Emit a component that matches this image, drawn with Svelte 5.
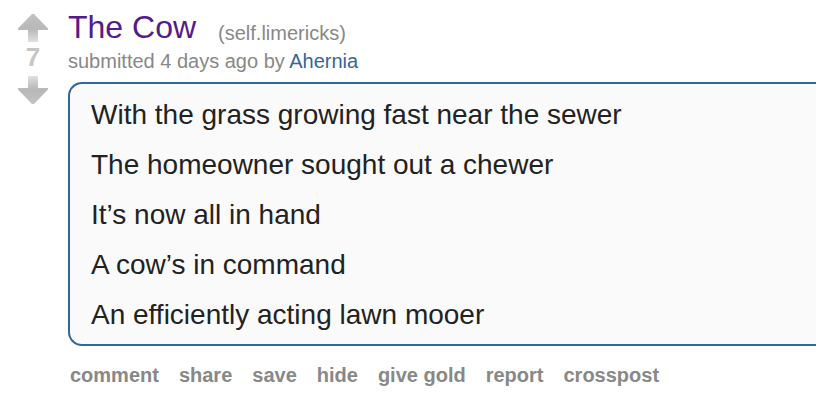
<script>
  const lines = [
    'With the grass growing fast near the sewer',
    'The homeowner sought out a chewer',
    'It’s now all in hand',
    'A cow’s in command',
    'An efficiently acting lawn mooer'
  ];
  const actions = ['comment', 'share', 'save', 'hide', 'give gold', 'report', 'crosspost'];
  let score = $state(7);
</script>

{#snippet arrow(id)}
  <svg width="30" height="28" viewBox="0 0 30 28" aria-hidden="true">
    <defs>
      <linearGradient {id} x1="0" y1="0" x2="0" y2="28" gradientUnits="userSpaceOnUse">
        <stop offset="0" stop-color="#c2c2c2" />
        <stop offset="0.5" stop-color="#b8b8b8" />
        <stop offset="0.62" stop-color="#bfbfbf" />
        <stop offset="1" stop-color="#e0e0e0" />
      </linearGradient>
    </defs>
    <path d="M14 0h2L30 14.500V16H20v12H10V16H0v-1.500z" fill="url(#{id})" />
  </svg>
{/snippet}

<article class="post">
  <div class="votes">
    <button type="button" aria-label="upvote" onclick={() => score++}>{@render arrow('up-fill')}</button>
    <span class="score">{score}</span>
    <button type="button" class="down" aria-label="downvote" onclick={() => score--}>{@render arrow('down-fill')}</button>
  </div>
  <div class="entry">
    <header>
      <h1><a href="#post">The Cow</a></h1>
      <span class="domain">(<a href="#limericks">self.limericks</a>)</span>
    </header>
    <p class="tagline">submitted 4 days ago by <a href="#ahernia">Ahernia</a></p>
    <div class="body">
      {#each lines as line}
        <p>{line}</p>
      {/each}
    </div>
    <ul class="actions">
      {#each actions as action}
        <li><a href="#{action.replace(' ', '-')}">{action}</a></li>
      {/each}
    </ul>
  </div>
</article>

<style>
  :global(body) {
    background: #fff;
  }
  .post {
    display: flex;
    gap: 20px;
    padding: 8px 0 12px 18px;
    font-family: "Liberation Sans", Helvetica, Arial, sans-serif;
    color: #888;
  }
  p, h1, ul {
    margin: 0;
    padding: 0;
  }
  a {
    color: inherit;
    text-decoration: none;
  }
  .votes {
    display: flex;
    flex-direction: column;
    align-items: center;
    width: 30px;
    padding-top: 6px;
  }
  button {
    display: block;
    padding: 0;
    border: 0;
    background: none;
    cursor: pointer;
  }
  svg {
    display: block;
  }
  .down {
    transform: rotate(180deg);
  }
  .score {
    padding-bottom: 4px;
    font-size: 26px;
    font-weight: bold;
    line-height: 30px;
    color: #c6c6c6;
  }
  .entry {
    flex: 1;
    min-width: 0;
  }
  header {
    display: flex;
    align-items: flex-end;
    gap: 22px;
  }
  h1 {
    padding-bottom: 2px;
    font-size: 32px;
    font-weight: normal;
    line-height: 38px;
    color: #551a8b;
  }
  .domain {
    font-size: 20px;
    line-height: 30px;
  }
  .tagline {
    font-size: 20px;
    line-height: 26px;
  }
  .tagline a {
    color: #369;
  }
  .body {
    display: flex;
    flex-direction: column;
    gap: 10px;
    margin-top: 8px;
    padding: 11px 21px 9px;
    border: 2px solid #369;
    border-right: 0;
    border-radius: 14px 0 0 14px;
    background: #fafafa;
    font-size: 28px;
    line-height: 40px;
    color: #222;
  }
  .actions {
    display: flex;
    flex-wrap: wrap;
    gap: 20px;
    margin-top: 16px;
    padding-left: 2px;
    list-style: none;
    font-size: 20px;
    font-weight: bold;
    line-height: 26px;
  }
</style>
